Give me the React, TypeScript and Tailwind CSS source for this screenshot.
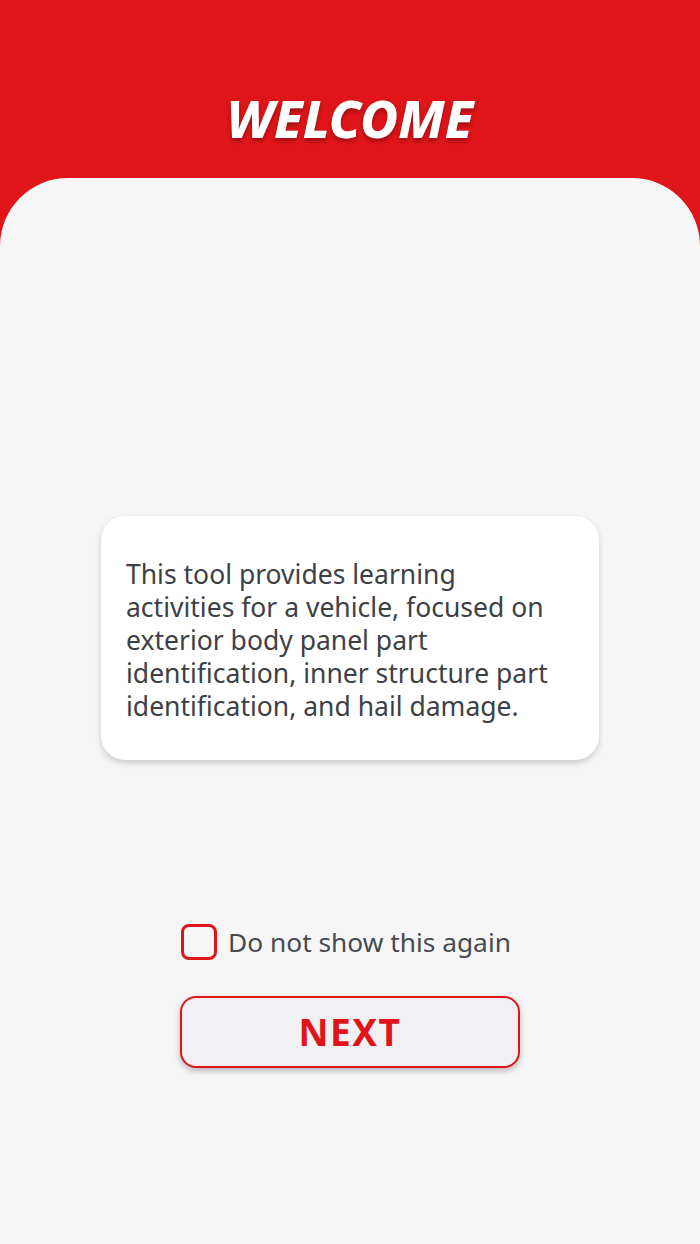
import { useState } from 'react';

export default function App() {
  const [dontShow, setDontShow] = useState(false);

  return (
    <div className="w-[700px] h-[1244px] bg-[#df1519] flex flex-col overflow-hidden font-['Noto_Sans','Open_Sans',sans-serif]">
      <div className="h-[178px] shrink-0 flex items-center justify-center pt-[58px]">
        <h1 className="text-white text-[52px] leading-[60px] font-extrabold italic [text-shadow:0_3px_4px_rgba(0,0,0,0.3)]">
          WELCOME
        </h1>
      </div>

      <div className="flex-1 bg-[#f6f6f6] rounded-t-[68px] flex flex-col items-center pt-[338px]">
        <div className="w-[498px] bg-white rounded-[24px] shadow-[0_3px_6px_rgba(0,0,0,0.18)] pl-[25px] pt-[42px] pb-[37px]">
          <p className="w-[440px] text-[#3d4146] text-[26.5px] leading-[33px]">
            This tool provides learning activities for a vehicle, focused on exterior body panel part identification, inner structure part identification, and hail damage.
          </p>
        </div>

        <label className="mt-[164px] mr-[8px] flex items-center gap-[11px] cursor-pointer">
          <button
            type="button"
            onClick={() => setDontShow(!dontShow)}
            className="w-[36px] h-[36px] rounded-[8px] border-[3px] border-[#df1519] bg-transparent flex items-center justify-center"
          >
            {dontShow && (
              <svg width="22" height="22" viewBox="0 0 24 24" fill="none" stroke="#df1519" strokeWidth="3" strokeLinecap="round" strokeLinejoin="round">
                <path d="M5 12l5 5L19 7" />
              </svg>
            )}
          </button>
          <span className="text-[#474b50] text-[26.3px] leading-[36px]">Do not show this again</span>
        </label>

        <button
          type="button"
          className="mt-[36px] w-[340px] h-[72px] rounded-[16px] border-2 border-[#df1519] bg-[#f1f1f3] shadow-[0_3px_6px_rgba(0,0,0,0.25)] flex items-center justify-center"
        >
          <span className="text-[#df1519] text-[37px] font-bold tracking-[1.5px]">NEXT</span>
        </button>
      </div>
    </div>
  );
}
